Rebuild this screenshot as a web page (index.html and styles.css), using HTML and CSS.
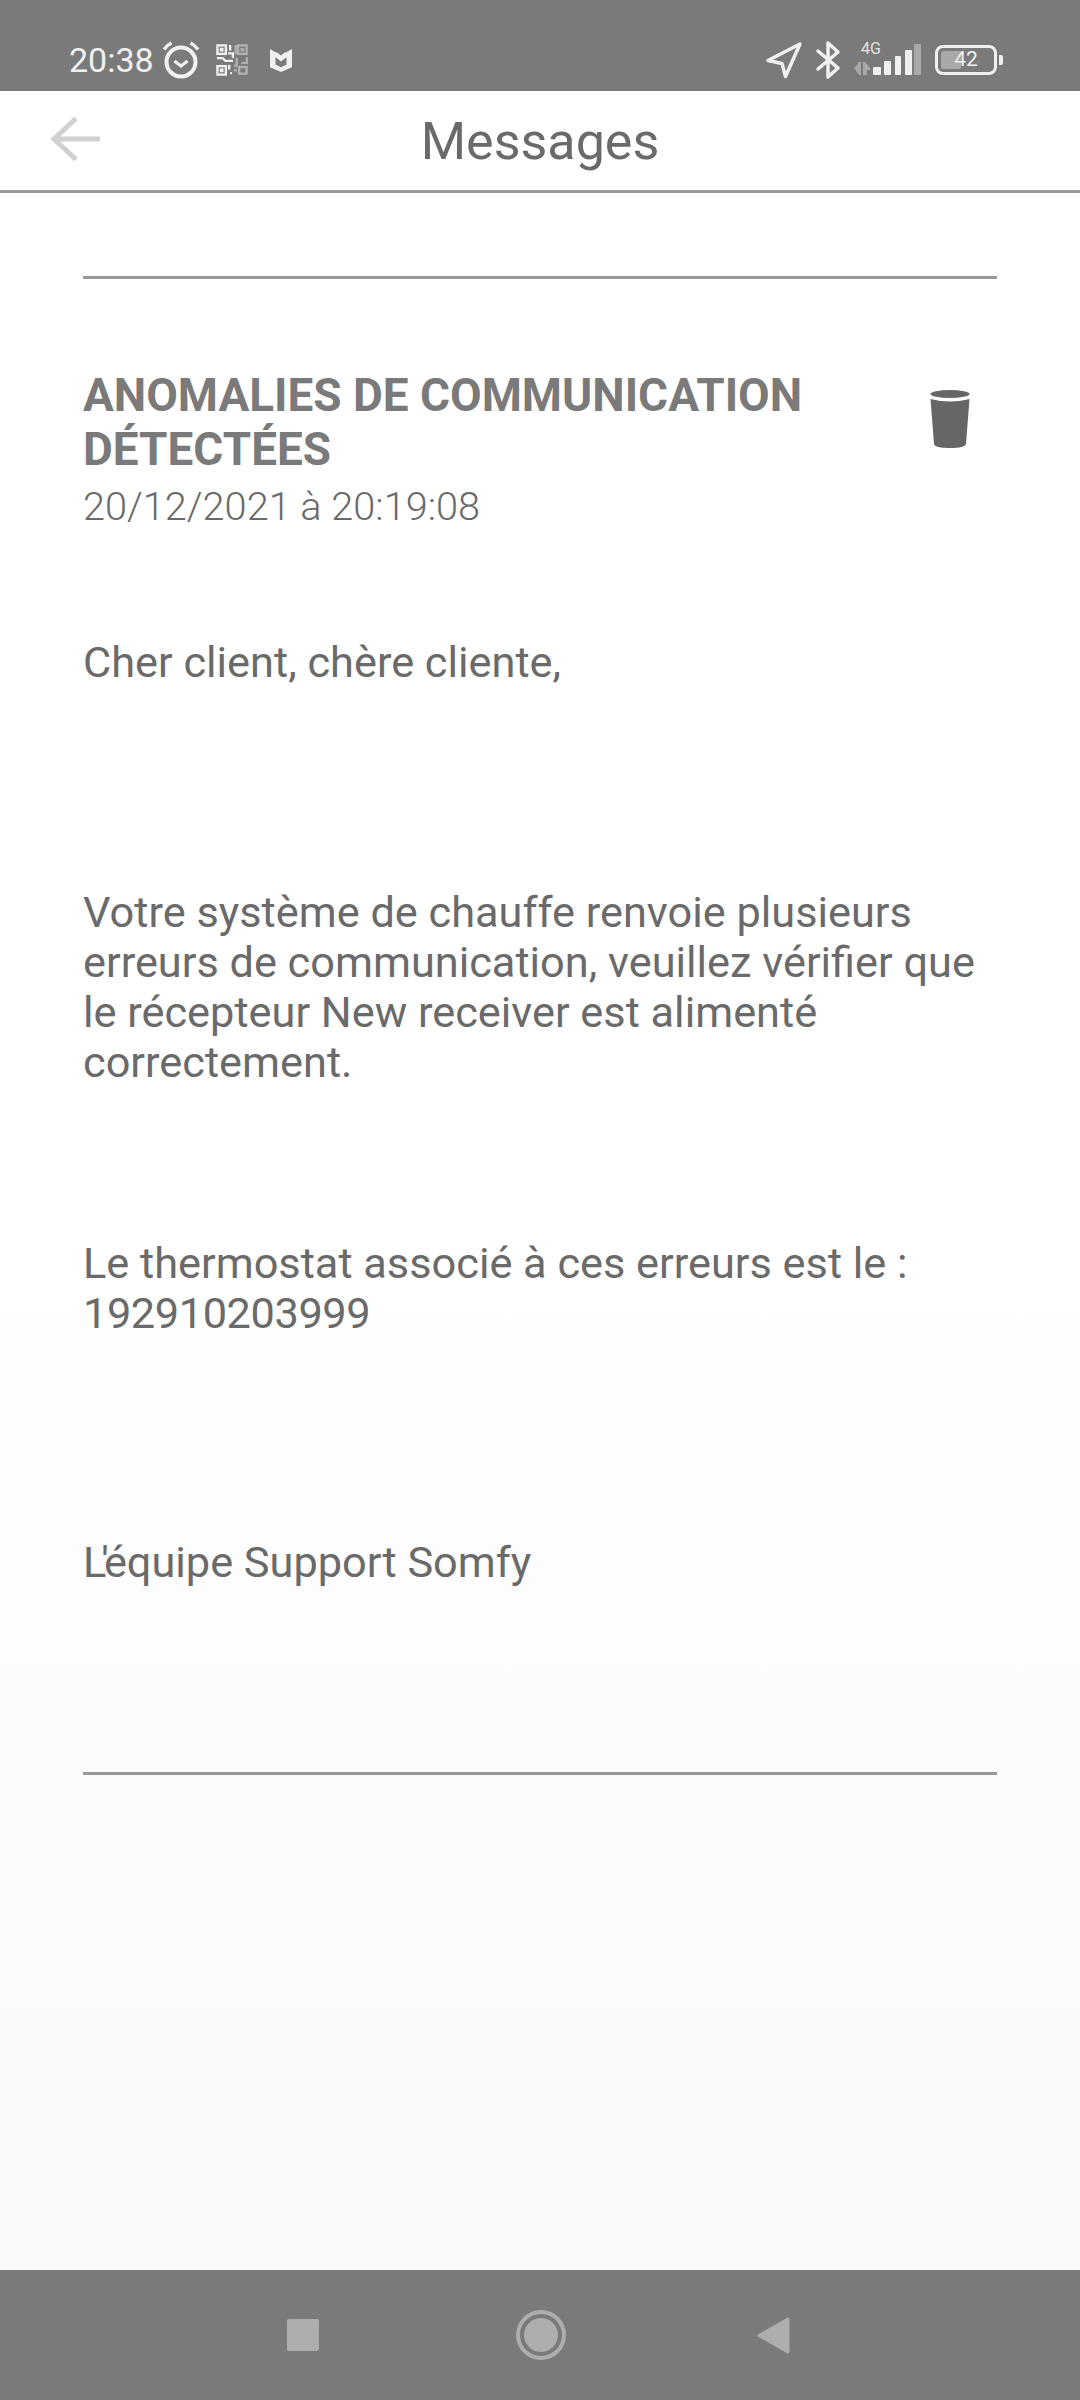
FILE: index.html
```html
<!DOCTYPE html>
<html lang="fr">
<head>
    <meta charset="UTF-8">
    <title>Messages</title>
    <link rel="stylesheet" href="styles.css">
</head>
<body>
    <div class="status-bar">
        <div class="status-left">
            <span class="clock">20:38</span>
            <svg class="ico-alarm" width="38" height="38" viewBox="0 0 38 38" fill="none" stroke="#f0f0f0">
                <circle cx="19" cy="21" r="14.5" stroke-width="4"/>
                <path d="M12.5 20l6.500 5 6.500-5" stroke-width="3"/>
                <path d="M2 8.500Q5 4 9.500 2M36 8.500Q33 4 28.500 2" stroke-width="3.500"/>
            </svg>
            <svg class="ico-qr" width="32" height="32" viewBox="0 0 34 34">
                <g fill="none" stroke="#f0f0f0" stroke-width="2.500">
                    <rect x="1.500" y="1.500" width="9" height="9"/>
                    <rect x="1.500" y="23.500" width="9" height="9"/>
                    <path d="M15 1v6M13 10h5v5M1 15h6l3 3h8M14 22v5M15 31h2"/>
                </g>
                <g fill="none" stroke="#b0b0b0" stroke-width="2.500">
                    <rect x="23.500" y="1.500" width="9" height="9"/>
                    <rect x="24.500" y="24.500" width="8" height="7"/>
                    <path d="M21 1v10M33 14v6h-6M22 15v8h-3M19 28h3"/>
                </g>
                <rect x="4" y="4" width="4" height="4" fill="#f0f0f0"/>
                <rect x="4" y="26" width="4" height="4" fill="#f0f0f0"/>
                <rect x="26" y="4" width="4" height="4" fill="#b0b0b0"/>
            </svg>
            <svg class="ico-shield" width="22" height="26" viewBox="0 0 24 26">
                <path d="M0 1l6 3.500h1.500L12 8l4.500-3.500H18L24 1v20l-12 5-12-5zM6 10v8l6 3 6-3v-8l-6 4.500z" fill="#f0f0f0" fill-rule="evenodd"/>
            </svg>
        </div>
        <div class="status-right">
            <svg class="ico-nav" width="38" height="38" viewBox="0 0 38 38">
                <path d="M35 3L3 19.500l14 3 3.500 13z" fill="none" stroke="#f0f0f0" stroke-width="3.500" stroke-linejoin="round"/>
            </svg>
            <svg class="ico-bt" width="26" height="40" viewBox="0 0 26 40">
                <path d="M3 11l20 17-10 9V3l10 9-20 17" fill="none" stroke="#f0f0f0" stroke-width="3.500" stroke-linecap="round" stroke-linejoin="round"/>
            </svg>
            <div class="signal">
                <span class="net-label">4G</span>
                <svg width="68" height="32" viewBox="0 0 68 32">
                    <path d="M0 24l4-4v-2h3v13h-2zM9 18h2l5 6v2h-3v5h-4z" fill="#a8a8a8"/>
                    <rect x="19" y="23" width="8" height="8" rx="1" fill="#f0f0f0"/>
                    <rect x="30" y="17" width="7" height="14" rx="1" fill="#f0f0f0"/>
                    <rect x="41" y="12" width="6" height="19" rx="1" fill="#f0f0f0"/>
                    <rect x="51" y="6" width="7" height="25" rx="1" fill="#f0f0f0"/>
                    <rect x="60" y="0" width="7" height="31" rx="1" fill="#a8a8a8"/>
                </svg>
            </div>
            <div class="battery">
                <div class="battery-body">
                    <div class="battery-fill"></div>
                    <span class="battery-num">42</span>
                </div>
                <div class="battery-tip"></div>
            </div>
        </div>
    </div>

    <div class="app-header">
        <svg class="back-arrow" width="52" height="46" viewBox="0 0 52 46">
            <path d="M50 23H5M26 2.500L4 23l22 20.500" fill="none" stroke="#d0d0d0" stroke-width="5"/>
        </svg>
        <h1 class="app-title">Messages</h1>
    </div>

    <div class="content">
        <div class="message">
            <div class="message-head">
                <div>
                    <h2 class="message-title">ANOMALIES DE COMMUNICATION DÉTECTÉES</h2>
                    <div class="message-date">20/12/2021 à 20:19:08</div>
                </div>
                <svg class="trash" width="40" height="60" viewBox="0 0 40 60">
                    <ellipse cx="20" cy="5" rx="19.500" ry="4" fill="#666"/>
                    <path d="M0.500 10Q20 15 39.500 10L36 55Q35 59 20 59T4 55z" fill="#666"/>
                </svg>
            </div>
            <p class="para p1">Cher client, chère cliente,</p>
            <p class="para p2">Votre système de chauffe renvoie plusieurs erreurs de communication, veuillez vérifier que le récepteur New receiver est alimenté correctement.</p>
            <p class="para p3">Le thermostat associé à ces erreurs est le :<br><span class="serial">192910203999</span></p>
            <p class="para p4"><span class="tight-l">L'</span>équipe Support Somfy</p>
        </div>
    </div>

    <div class="nav-bar">
        <div class="nav-square"></div>
        <div class="nav-home"><div class="nav-home-dot"></div></div>
        <svg class="nav-back" width="33" height="37" viewBox="0 0 33 37">
            <path d="M2 18.500L31 2v33z" fill="#adadad" stroke="#adadad" stroke-width="3" stroke-linejoin="round"/>
        </svg>
    </div>
</body>
</html>
```

FILE: styles.css
```css
* {
    box-sizing: border-box;
}
html, body {
    margin: 0;
    padding: 0;
}
body {
    width: 1080px;
    height: 2400px;
    display: flex;
    flex-direction: column;
    font-family: Roboto, sans-serif;
    background-color: #ffffff;
    overflow: hidden;
}

/* status bar */
.status-bar {
    height: 91px;
    flex: none;
    background-color: #7a7a7a;
    color: #f0f0f0;
    display: flex;
    justify-content: space-between;
    align-items: center;
    padding: 29px 77px 0 69px;
}
.status-left, .status-right {
    display: flex;
    align-items: center;
}
.clock {
    font-size: 34px;
    line-height: 40px;
    margin-right: 8px;
}
.ico-qr {
    margin-left: 16px;
}
.ico-shield {
    margin-left: 22px;
}
.ico-bt {
    margin-left: 12px;
}
.signal {
    position: relative;
    margin-left: 13px;
    width: 68px;
    height: 32px;
}
.signal svg {
    display: block;
}
.net-label {
    position: absolute;
    left: 7px;
    top: -3px;
    font-size: 16px;
    line-height: 16px;
    color: #e4e4e4;
}
.battery {
    display: flex;
    align-items: center;
    margin-left: 13px;
}
.battery-body {
    position: relative;
    width: 62px;
    height: 30px;
    border: 3.5px solid #f0f0f0;
    border-radius: 8px;
    text-align: center;
}
.battery-fill {
    position: absolute;
    left: 3px;
    top: 3px;
    bottom: 3px;
    width: 20px;
    background-color: #a8a8a8;
    border-radius: 2px;
}
.battery-num {
    position: relative;
    display: block;
    font-size: 21px;
    line-height: 23px;
    color: #f0f0f0;
}
.battery-tip {
    width: 4px;
    height: 10px;
    margin-left: 2px;
    background-color: #f0f0f0;
    border-radius: 0 2px 2px 0;
}

/* app header */
.app-header {
    position: relative;
    height: 102px;
    flex: none;
    border-bottom: 3px solid #999999;
    display: flex;
    align-items: center;
    justify-content: center;
    background-color: #ffffff;
    padding-top: 2px;
}
.back-arrow {
    position: absolute;
    left: 50px;
    top: 25px;
}
.app-title {
    margin: 0;
    font-size: 52px;
    font-weight: 400;
    color: #6a6a6a;
}

/* message */
.content {
    flex: 1;
    padding: 83px 83px 0;
    background: linear-gradient(#ffffff 50%, #f9f9f9 100%);
}
.message {
    border-top: 3px solid #999999;
    border-bottom: 3px solid #999999;
    height: 1499px;
}
.message-head {
    display: flex;
    justify-content: space-between;
    align-items: flex-start;
    padding-top: 89px;
}
.message-title {
    margin: 0;
    width: 800px;
    font-size: 45.9px;
    line-height: 54px;
    font-weight: 700;
    color: #7a7a7a;
}
.message-date {
    font-size: 39.7px;
    line-height: 46px;
    font-weight: 300;
    color: #6a6a6a;
    margin-top: 8px;
}
.trash {
    margin: 21px 27px 0 0;
}
.para {
    margin: 0;
    font-size: 43.3px;
    line-height: 50px;
    color: #6a6a6a;
}
.serial {
    letter-spacing: -0.4px;
}
.tight-l {
    letter-spacing: -5px;
}
.p1 {
    margin-top: 108px;
}
.p2 {
    margin-top: 200px;
}
.p3 {
    margin-top: 151px;
}
.p4 {
    margin-top: 199px;
}

/* nav bar */
.nav-bar {
    height: 130px;
    flex: none;
    background-color: #7a7a7a;
    display: flex;
    align-items: center;
    justify-content: space-between;
    padding: 0 290px 0 287px;
}
.nav-square {
    width: 32px;
    height: 32px;
    background-color: #adadad;
    border-radius: 2px;
}
.nav-home {
    width: 50px;
    height: 50px;
    margin-left: 6px;
    border: 4px solid #adadad;
    border-radius: 50%;
    display: flex;
    align-items: center;
    justify-content: center;
}
.nav-home-dot {
    width: 34px;
    height: 34px;
    background-color: #adadad;
    border-radius: 50%;
}
```
